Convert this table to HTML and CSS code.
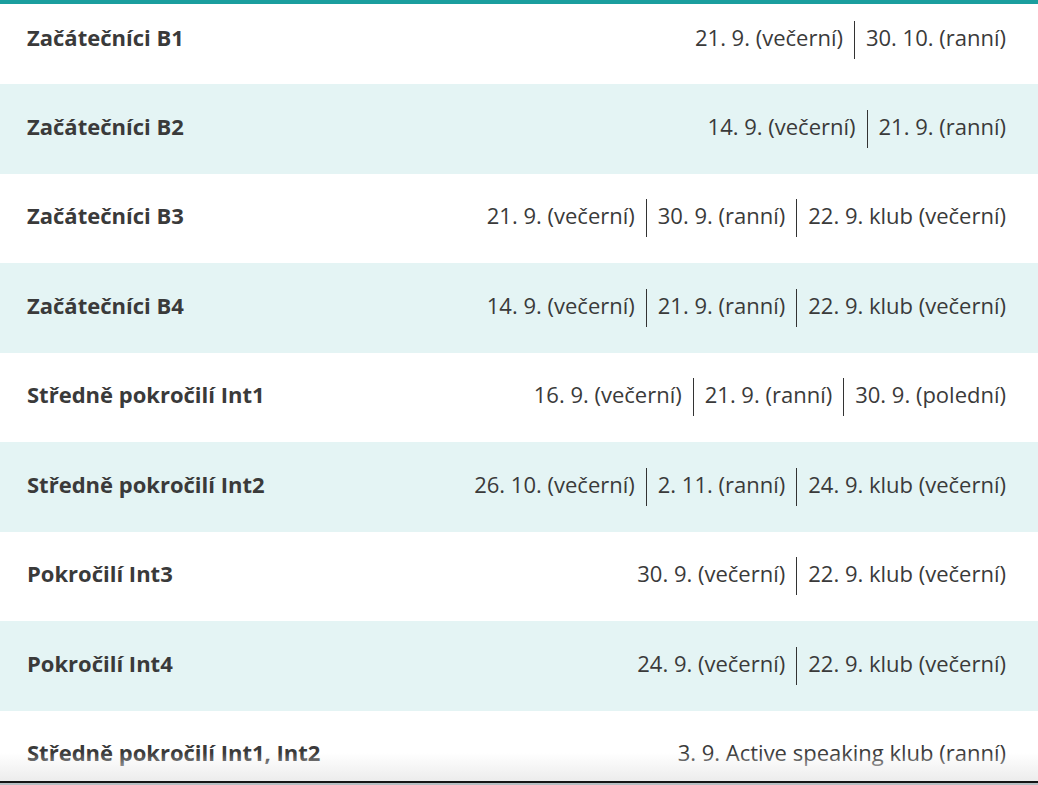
FILE: index.html
```html
<!DOCTYPE html>
<html lang="cs">
<head>
<meta charset="utf-8">
<title>Termíny kurzů</title>
<link rel="stylesheet" href="styles.css">
</head>
<body>
<div class="viewport">
  <div class="table">
    <div class="row first">
      <span class="label">Začátečníci B1</span>
      <span class="dates"><span class="d">21. 9. (večerní)</span><span class="d">30. 10. (ranní)</span></span>
    </div>
    <div class="row alt">
      <span class="label">Začátečníci B2</span>
      <span class="dates"><span class="d">14. 9. (večerní)</span><span class="d">21. 9. (ranní)</span></span>
    </div>
    <div class="row">
      <span class="label">Začátečníci B3</span>
      <span class="dates"><span class="d">21. 9. (večerní)</span><span class="d">30. 9. (ranní)</span><span class="d">22. 9. klub (večerní)</span></span>
    </div>
    <div class="row alt">
      <span class="label">Začátečníci B4</span>
      <span class="dates"><span class="d">14. 9. (večerní)</span><span class="d">21. 9. (ranní)</span><span class="d">22. 9. klub (večerní)</span></span>
    </div>
    <div class="row">
      <span class="label">Středně pokročilí Int1</span>
      <span class="dates"><span class="d">16. 9. (večerní)</span><span class="d">21. 9. (ranní)</span><span class="d">30. 9. (polední)</span></span>
    </div>
    <div class="row alt">
      <span class="label">Středně pokročilí Int2</span>
      <span class="dates"><span class="d">26. 10. (večerní)</span><span class="d">2. 11. (ranní)</span><span class="d">24. 9. klub (večerní)</span></span>
    </div>
    <div class="row">
      <span class="label">Pokročilí Int3</span>
      <span class="dates"><span class="d">30. 9. (večerní)</span><span class="d">22. 9. klub (večerní)</span></span>
    </div>
    <div class="row alt">
      <span class="label">Pokročilí Int4</span>
      <span class="dates"><span class="d">24. 9. (večerní)</span><span class="d">22. 9. klub (večerní)</span></span>
    </div>
    <div class="row">
      <span class="label">Středně pokročilí Int1, Int2</span>
      <span class="dates"><span class="d">3. 9. Active speaking klub (ranní)</span></span>
    </div>
  </div>
  <div class="fade"></div>
</div>
<div class="edge"></div>
</body>
</html>
```

FILE: styles.css
```css
html, body {
  margin: 0;
  padding: 0;
  background: #b6bec2;
}
body {
  height: 785px;
  overflow: hidden;
  font-family: "Open Sans", "Liberation Sans", sans-serif;
  font-size: 22px;
  color: #3a3a3a;
}
.viewport {
  position: relative;
  height: 777px;
  overflow: hidden;
  background: #fff;
  border-top: 4px solid #1a9e9e;
}
.table {
  display: flex;
  flex-direction: column;
}
.row {
  box-sizing: border-box;
  height: 89.5px;
  flex: 0 0 auto;
  display: flex;
  align-items: center;
  justify-content: space-between;
  padding: 0 32px 0 27px;
  background: #fff;
}
.row.alt {
  background: #e4f4f4;
}
.row.first {
  height: 80px;
  padding-bottom: 9px;
}
.label {
  font-weight: 700;
  line-height: 30px;
  padding: 1px 0 7px;
  white-space: nowrap;
}
.dates {
  display: flex;
  align-items: center;
}
.d {
  line-height: 30px;
  padding: 1px 11px 7px;
  white-space: nowrap;
}
.d + .d {
  border-left: 1px solid #333;
}
.d:last-child {
  padding-right: 0;
}
.fade {
  position: absolute;
  left: 0;
  right: 0;
  bottom: 0;
  height: 28px;
  background: linear-gradient(to bottom, rgba(255,255,255,0), #ececec);
  pointer-events: none;
}
.edge {
  height: 2px;
  background: #151515;
}
```
